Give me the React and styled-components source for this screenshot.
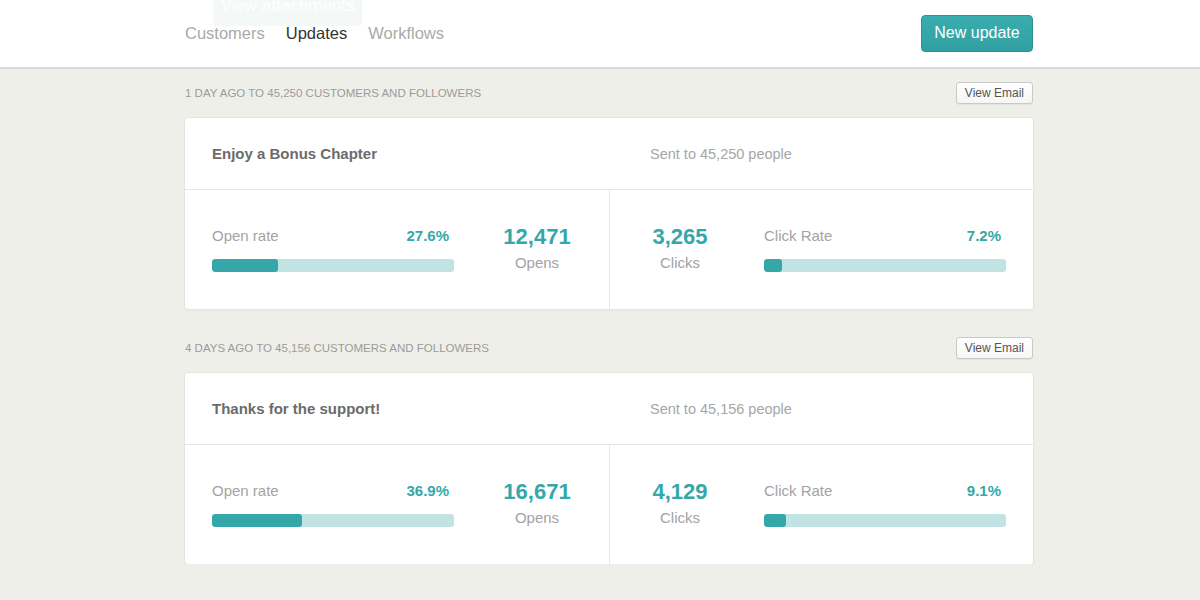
import styled, { createGlobalStyle } from "styled-components";

const GlobalStyle = createGlobalStyle`
  body {
    margin: 0;
    background: #efefea;
    font-family: "Liberation Sans", Arial, sans-serif;
    -webkit-font-smoothing: antialiased;
  }
`;

const Header = styled.header`
  background: #fff;
  height: 67px;
  border-bottom: 2px solid #dcdcd7;
  position: relative;
`;

const Inner = styled.div`
  width: 848px;
  margin-left: 185px;
`;

const HeaderInner = styled(Inner)`
  height: 100%;
  display: flex;
  align-items: center;
  justify-content: space-between;
`;

const Ghost = styled.div`
  position: absolute;
  top: 0;
  left: 213px;
  width: 149px;
  height: 26px;
  background: #f4f9f8;
  color: #fff;
  font-size: 17px;
  line-height: 12px;
  text-align: center;
  border-radius: 0 0 3px 3px;
  overflow: hidden;
`;

const Nav = styled.nav`
  display: flex;
  gap: 21px;
  margin-top: -1px;
`;

const NavItem = styled.a`
  font-size: 16.5px;
  color: ${(p) => (p.$active ? "#333" : "#aaa")};
  text-decoration: none;
`;

const PrimaryButton = styled.button`
  font-family: inherit;
  font-size: 16px;
  color: #fff;
  background: linear-gradient(#3aadaf, #31a0a2);
  border: 1px solid #2c9496;
  border-radius: 4px;
  height: 37px;
  width: 112px;
  padding: 0;
  margin-bottom: 1px;
  cursor: pointer;
`;

const Main = styled(Inner)`
  padding-top: 13px;
  display: flex;
  flex-direction: column;
  gap: 28px;
`;

const Section = styled.section`
  display: flex;
  flex-direction: column;
  gap: 14px;
`;

const SectionHead = styled.div`
  display: flex;
  align-items: center;
  justify-content: space-between;
  height: 22px;
`;

const SectionLabel = styled.div`
  font-size: 11.5px;
  color: #9b9b98;
  text-transform: uppercase;
`;

const SmallButton = styled.button`
  font-family: inherit;
  font-size: 12px;
  color: #555;
  background: linear-gradient(#fff, #f6f6f4);
  border: 1px solid #c9c9c6;
  border-radius: 3px;
  height: 22px;
  padding: 0 8px;
  box-shadow: 0 1px 1px rgba(0, 0, 0, 0.05);
`;

const Card = styled.div`
  background: #fff;
  border-radius: 3px;
  box-shadow: 0 0 0 1px #e4e4e0, 0 1px 2px rgba(0, 0, 0, 0.08);
`;

const CardHead = styled.div`
  display: grid;
  grid-template-columns: 438px 1fr;
  align-items: center;
  height: 71px;
  border-bottom: 1px solid #e6e6e3;
  padding-left: 27px;
`;

const Title = styled.div`
  font-size: 15px;
  font-weight: bold;
  color: #6b6b6b;
`;

const Sent = styled.div`
  font-size: 14.5px;
  color: #a6a6a6;
`;

const Stats = styled.div`
  display: grid;
  grid-template-columns: 425px 1fr;
  height: 119px;
`;

const Half = styled.div`
  display: flex;
  align-items: center;
  padding: ${(p) => (p.$left ? "0 0 0 27px" : "0 27px 0 0")};
  border-right: ${(p) => (p.$left ? "1px solid #e6e6e3" : "none")};
`;

const RateBlock = styled.div`
  width: 242px;
  margin-left: ${(p) => p.$offset || 0}px;
`;

const RateHead = styled.div`
  display: flex;
  justify-content: space-between;
  align-items: baseline;
  margin-bottom: 15px;
  padding-right: 5px;
`;

const RateLabel = styled.span`
  font-size: 15px;
  color: #a3a3a3;
`;

const RateValue = styled.span`
  font-size: 15px;
  font-weight: bold;
  color: #35a7a9;
`;

const Track = styled.div`
  height: 13px;
  border-radius: 3px;
  background: #c1e3e4;
  overflow: hidden;
`;

const Fill = styled.div`
  height: 100%;
  border-radius: 3px;
  background: #35a7a9;
`;

const CountBlock = styled.div`
  width: 140px;
  margin-left: ${(p) => p.$offset || 0}px;
  text-align: center;
  margin-top: -4px;
`;

const CountValue = styled.div`
  font-size: 22px;
  font-weight: bold;
  color: #35a7a9;
  line-height: 26px;
`;

const CountLabel = styled.div`
  font-size: 15px;
  color: #a3a3a3;
  margin-top: 4px;
`;

const updates = [
  {
    when: "1 day ago to 45,250 customers and followers",
    title: "Enjoy a Bonus Chapter",
    sent: "Sent to 45,250 people",
    openRate: "27.6%",
    openFill: 27.3,
    opens: "12,471",
    clicks: "3,265",
    clickRate: "7.2%",
    clickFill: 7.4,
  },
  {
    when: "4 days ago to 45,156 customers and followers",
    title: "Thanks for the support!",
    sent: "Sent to 45,156 people",
    openRate: "36.9%",
    openFill: 37,
    opens: "16,671",
    clicks: "4,129",
    clickRate: "9.1%",
    clickFill: 9.1,
  },
];

const Rate = ({ label, value, fill, offset }) => (
  <RateBlock $offset={offset}>
    <RateHead>
      <RateLabel>{label}</RateLabel>
      <RateValue>{value}</RateValue>
    </RateHead>
    <Track>
      <Fill style={{ width: `${fill}%` }} />
    </Track>
  </RateBlock>
);

const Count = ({ value, label, offset }) => (
  <CountBlock $offset={offset}>
    <CountValue>{value}</CountValue>
    <CountLabel>{label}</CountLabel>
  </CountBlock>
);

const UpdateCard = ({ item }) => (
  <Section>
    <SectionHead>
      <SectionLabel>{item.when}</SectionLabel>
      <SmallButton>View Email</SmallButton>
    </SectionHead>
    <Card>
      <CardHead>
        <Title>{item.title}</Title>
        <Sent>{item.sent}</Sent>
      </CardHead>
      <Stats>
        <Half $left>
          <Rate label="Open rate" value={item.openRate} fill={item.openFill} />
          <Count value={item.opens} label="Opens" offset={13} />
        </Half>
        <Half>
          <Count value={item.clicks} label="Clicks" />
          <Rate label="Click Rate" value={item.clickRate} fill={item.clickFill} offset={14} />
        </Half>
      </Stats>
    </Card>
  </Section>
);

export default function App() {
  return (
    <>
      <GlobalStyle />
      <Header>
        <Ghost>View attachments</Ghost>
        <HeaderInner>
          <Nav>
            <NavItem>Customers</NavItem>
            <NavItem $active>Updates</NavItem>
            <NavItem>Workflows</NavItem>
          </Nav>
          <PrimaryButton>New update</PrimaryButton>
        </HeaderInner>
      </Header>
      <Main>
        {updates.map((u) => (
          <UpdateCard key={u.title} item={u} />
        ))}
      </Main>
    </>
  );
}
